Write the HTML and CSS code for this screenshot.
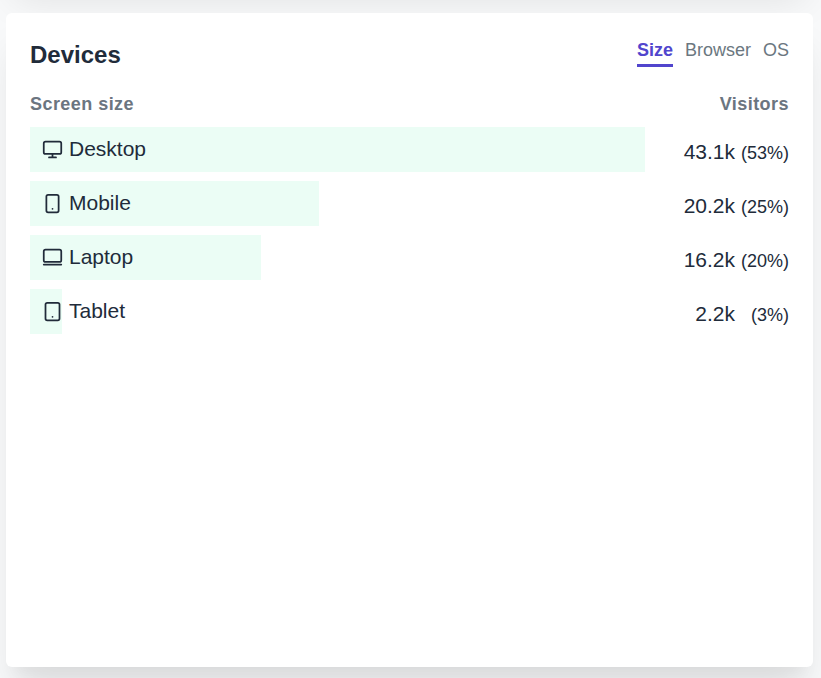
FILE: index.html
```html
<!DOCTYPE html>
<html lang="en">
<head>
<meta charset="utf-8">
<title>Devices</title>
<link rel="stylesheet" href="styles.css">
</head>
<body>
<div class="card card-previous"></div>
<section class="card">
  <header class="card-header">
    <h3 class="title">Devices</h3>
    <nav class="tabs">
      <span class="tab active">Size</span>
      <span class="tab">Browser</span>
      <span class="tab">OS</span>
    </nav>
  </header>
  <div class="list-header"><span>Screen size</span><span>Visitors</span></div>
  <div class="row">
    <div class="track"><div class="bar" style="width:615px"></div>
      <span class="label"><svg class="icon" viewBox="0 0 24 24"><rect x="2" y="3" width="20" height="14" rx="2"/><path d="M8 21h8M12 17v4"/></svg>Desktop</span></div>
    <span class="value">43.1k<span class="percent">(53%)</span></span>
  </div>
  <div class="row">
    <div class="track"><div class="bar" style="width:289px"></div>
      <span class="label"><svg class="icon" viewBox="0 0 24 24"><rect x="5" y="2" width="14" height="20" rx="2"/><path d="M12 18h.01"/></svg>Mobile</span></div>
    <span class="value">20.2k<span class="percent">(25%)</span></span>
  </div>
  <div class="row">
    <div class="track"><div class="bar" style="width:231px"></div>
      <span class="label"><svg class="icon" viewBox="0 0 24 24"><rect x="2" y="3" width="20" height="14" rx="2"/><path d="M2 20h20"/></svg>Laptop</span></div>
    <span class="value">16.2k<span class="percent">(20%)</span></span>
  </div>
  <div class="row">
    <div class="track"><div class="bar" style="width:32px"></div>
      <span class="label"><svg class="icon" viewBox="0 0 24 24"><rect x="4" y="2" width="16" height="20" rx="2"/><path d="M12 18h.01"/></svg>Tablet</span></div>
    <span class="value">2.2k<span class="percent">(3%)</span></span>
  </div>
</section>
</body>
</html>
```
FILE: styles.css
```css
* { box-sizing: border-box; }
html { height: 100%; overflow: hidden; }
body {
  margin: 0;
  height: 100%;
  padding: 13px 8px 0 6px;
  overflow: hidden;
  background: #f8f9fa;
  color: #212b3a;
  font-family: "Liberation Sans", Arial, sans-serif;
}
.card {
  height: 654px;
  padding: 24px;
  border-radius: 6px;
  background: #fff;
  box-shadow: 0 30px 37.5px -7.5px rgba(0, 0, 0, .1), 0 15px 15px -7.5px rgba(0, 0, 0, .04);
}
.card-previous { margin-top: -690px; margin-bottom: 36px; }
.card-header { display: flex; justify-content: space-between; height: 36px; }
.title { margin: 0; font-size: 24px; line-height: 36px; }
.tabs { display: flex; gap: 12px; color: #6b7780; font-size: 18px; line-height: 27px; }
.tab { height: 30px; }
.active { width: 36px; border-bottom: 3px solid #5145cd; color: #5145cd; font-weight: 700; }
.list-header {
  display: flex;
  justify-content: space-between;
  margin: 18px 0 9px;
  color: #6b7580;
  font-size: 18px;
  font-weight: 700;
  line-height: 27px;
  letter-spacing: .45px;
}
.row { display: flex; justify-content: space-between; height: 45px; margin-bottom: 9px; }
.track { display: grid; }
.bar, .label { grid-area: 1 / 1; }
.bar { height: 45px; background: #ebfdf5; }
.label { display: flex; gap: 6px; padding-left: 12px; font-size: 21px; line-height: 44px; }
.icon {
  width: 21px;
  height: 21px;
  margin-top: 12px;
  fill: none;
  stroke: currentColor;
  stroke-width: 2;
  stroke-linecap: round;
  stroke-linejoin: round;
}
.value { display: flex; align-items: baseline; font-size: 21px; line-height: 50px; }
.percent { width: 54px; font-size: 18px; text-align: right; }
```
